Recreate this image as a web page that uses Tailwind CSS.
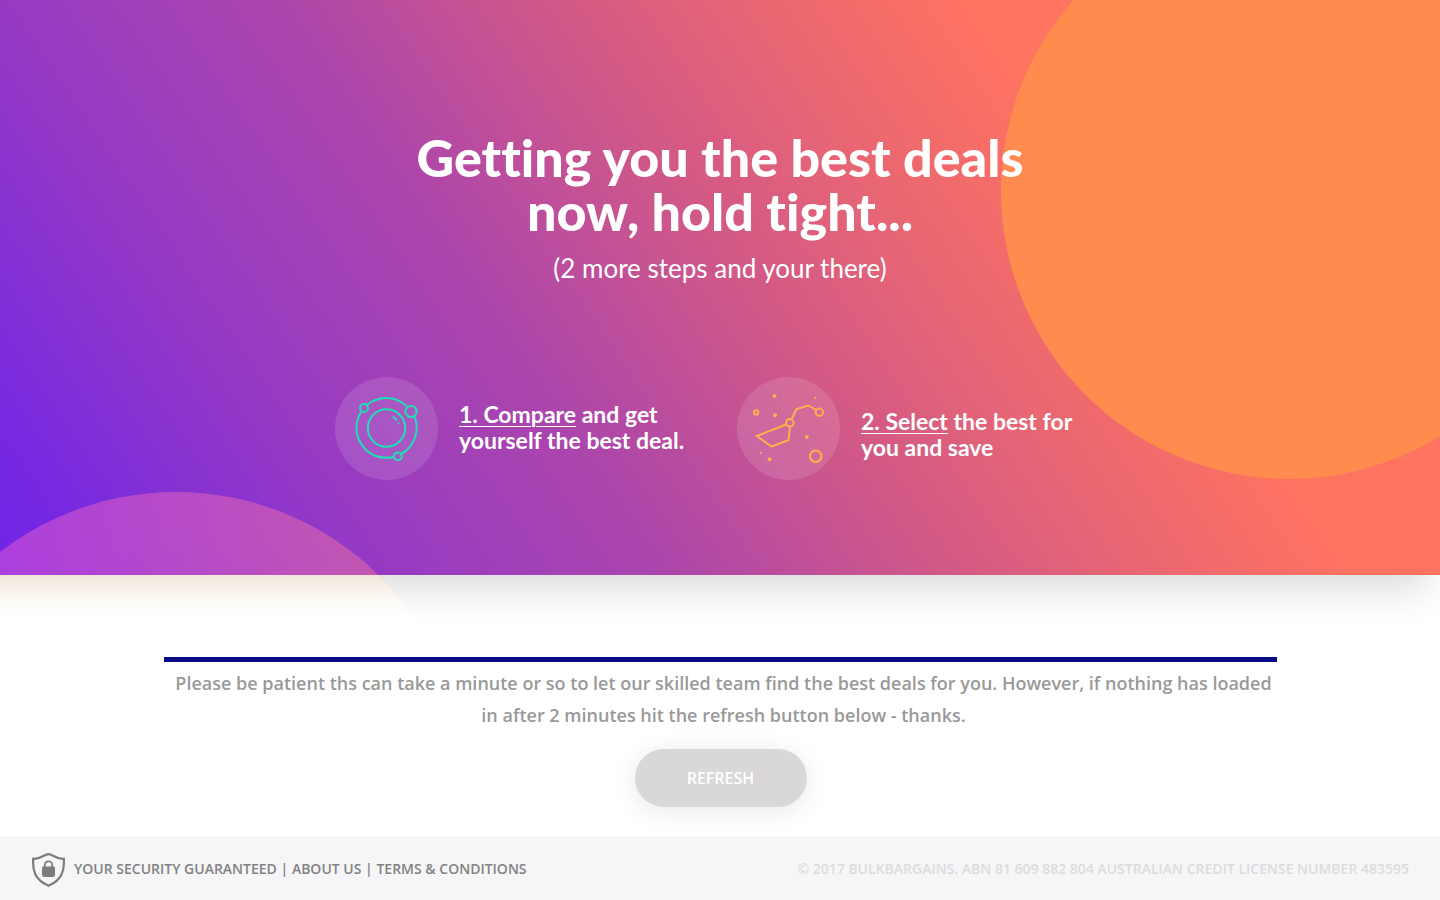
<!DOCTYPE html>
<html lang="en">
<head>
<meta charset="utf-8">
<meta name="viewport" content="width=device-width, initial-scale=1">
<title>BulkBargains</title>
<script src="https://cdn.jsdelivr.net/npm/@tailwindcss/browser@4"></script>
</head>
<body class="flex min-h-screen flex-col overflow-x-hidden bg-white font-['Open_Sans',sans-serif]">
<header class="relative shadow-[-10px_14px_36px_rgba(0,0,0,0.14)]">
  <div class="relative overflow-hidden bg-[linear-gradient(56deg,#7024e8_0%,#7729e0_6%,#963ac4_21%,#ab45ad_36%,#d05888_51%,#ec6870_64%,#ff7361_74%)] font-['Lato',sans-serif] text-white [font-variant-ligatures:none]">
    <div class="absolute left-[1001px] -top-[97px] size-[576px] rounded-full bg-[#ff8b4e]"></div>
    <div class="absolute -left-[112px] top-[492px] size-[576px] rounded-full bg-[linear-gradient(90deg,#ff66cf_20%,#ff7d98_85%)] opacity-42"></div>
    <div class="relative flex flex-col items-center pt-[130px] pb-[95px]">
      <h1 class="text-center text-[52px] leading-[54px] font-black">Getting you the best deals<br>now, hold tight...</h1>
      <p class="mt-3 text-[26px] leading-[36px]">(2 more steps and your there)</p>
      <ol class="mt-[91px] flex w-[770px] gap-[53px]">
        <li class="flex items-center gap-[21px]">
          <span class="size-[103px] shrink-0 rounded-full bg-white/12">
            <svg class="size-full" viewBox="0 0 103 103" fill="none" stroke="#1de0b6" stroke-width="2" stroke-linecap="round" aria-hidden="true">
              <circle cx="51.5" cy="51" r="18.7"/>
              <path d="M32.3 27.8A30 30 0 0 1 71 28.5M79.500 39.500A30 30 0 0 1 66 77M58.500 80A30 30 0 0 1 26 35"/>
              <circle cx="29" cy="31" r="3.900"/><circle cx="76" cy="34.500" r="5.600"/><circle cx="62.800" cy="79.300" r="3.900"/>
              <path d="M58.500 40l3 3M63.600 46.500v.1"/>
            </svg>
          </span>
          <p class="w-[225px] pb-1 text-[23px] leading-[26px] font-bold whitespace-nowrap"><a href="#compare" class="underline decoration-1 underline-offset-3">1. Compare</a> and get<br>yourself the best deal.</p>
        </li>
        <li class="flex items-center gap-[21px]">
          <span class="size-[103px] shrink-0 rounded-full bg-white/12">
            <svg class="size-full" viewBox="0 0 103 103" fill="none" stroke="#ffb04a" stroke-width="2" aria-hidden="true">
              <path d="M49 47.500L19.800 59 34.600 69.500 51.600 63 53 50M54.500 42.500L59.500 32 71.500 28.500 79 33"/>
              <circle cx="52.800" cy="45.800" r="3.800"/><circle cx="82.300" cy="35.200" r="3.700"/><circle cx="78.700" cy="79.300" r="5.700"/><circle cx="19.200" cy="35.400" r="2.200"/>
              <g fill="#ffb04a" stroke="none"><circle cx="37.500" cy="19" r="2"/><circle cx="38" cy="38.200" r="2"/><circle cx="69.800" cy="60" r="2"/><circle cx="32.600" cy="82.200" r="2"/><circle cx="78.200" cy="21" r="1"/><circle cx="23.800" cy="76" r="1"/></g>
            </svg>
          </span>
          <p class="w-[225px] pt-[10px] text-[23px] leading-[26px] font-bold whitespace-nowrap"><a href="#select" class="underline decoration-1 underline-offset-3">2. Select</a> the best for<br>you and save</p>
        </li>
      </ol>
    </div>
  </div>
  <div class="absolute top-full left-0 h-[50px] w-full overflow-hidden">
    <div class="absolute -left-[112px] -top-[83px] size-[576px] rounded-full bg-[linear-gradient(180deg,#f0e8d8_83px,#f7efe8_95px,#fbf9f3_107px,#ffffff_123px)]"></div>
  </div>
</header>
<main class="flex flex-1 flex-col items-center pr-[163px] pl-[164px] pt-[82px]">
  <div class="h-[5px] w-full bg-[#080a82]"></div>
  <p class="mt-[5px] pl-[6px] text-center text-[18px] leading-[32px] font-semibold text-[#999]">Please be patient ths can take a minute or so to let our skilled team find the best deals for you. However, if nothing has loaded in after 2 minutes hit the refresh button below - thanks.</p>
  <button type="button" class="mt-[18px] h-[58px] w-[172px] rounded-full bg-[#d9d7d8] text-[16px] font-semibold text-white shadow-[0_4px_24px_rgba(60,70,90,0.12)]">REFRESH</button>
</main>
<footer class="flex h-[64px] items-center justify-between bg-[#f6f6f8] pr-[31px] pl-[32px] text-[14px] font-semibold text-[#828282]">
  <nav class="flex items-center gap-[9px]">
    <svg class="mt-1 h-[34px] w-[33px]" viewBox="0 0 33 34" aria-hidden="true">
      <path d="M16.500 1.200C12.500 1.200 8.500 6.500 1.200 5.800C.5 17 2.500 27 16.500 32.700C30.500 27 32.500 17 31.800 5.800C24.500 6.500 20.500 1.200 16.500 1.200Z" fill="none" stroke="#7c7c7c" stroke-width="2.200"/>
      <path d="M12.800 14v-2a3.700 3.700 0 0 1 7.400 0v2" fill="none" stroke="#7c7c7c" stroke-width="1.800"/>
      <path d="M11 13.500H22q1 0 1 1V21.500Q23 24 20.500 24H12.500Q10 24 10 21.500V14.500q0-1 1-1Z" fill="#7c7c7c"/>
    </svg>
    <span><a href="#security">YOUR SECURITY GUARANTEED</a> | <a href="#about">ABOUT US</a> | <a href="#terms">TERMS &amp; CONDITIONS</a></span>
  </nav>
  <p class="text-[#dcdcdd]">© 2017 BULKBARGAINS. ABN 81 609 882 804 AUSTRALIAN CREDIT LICENSE NUMBER 483595</p>
</footer>
</body>
</html>
